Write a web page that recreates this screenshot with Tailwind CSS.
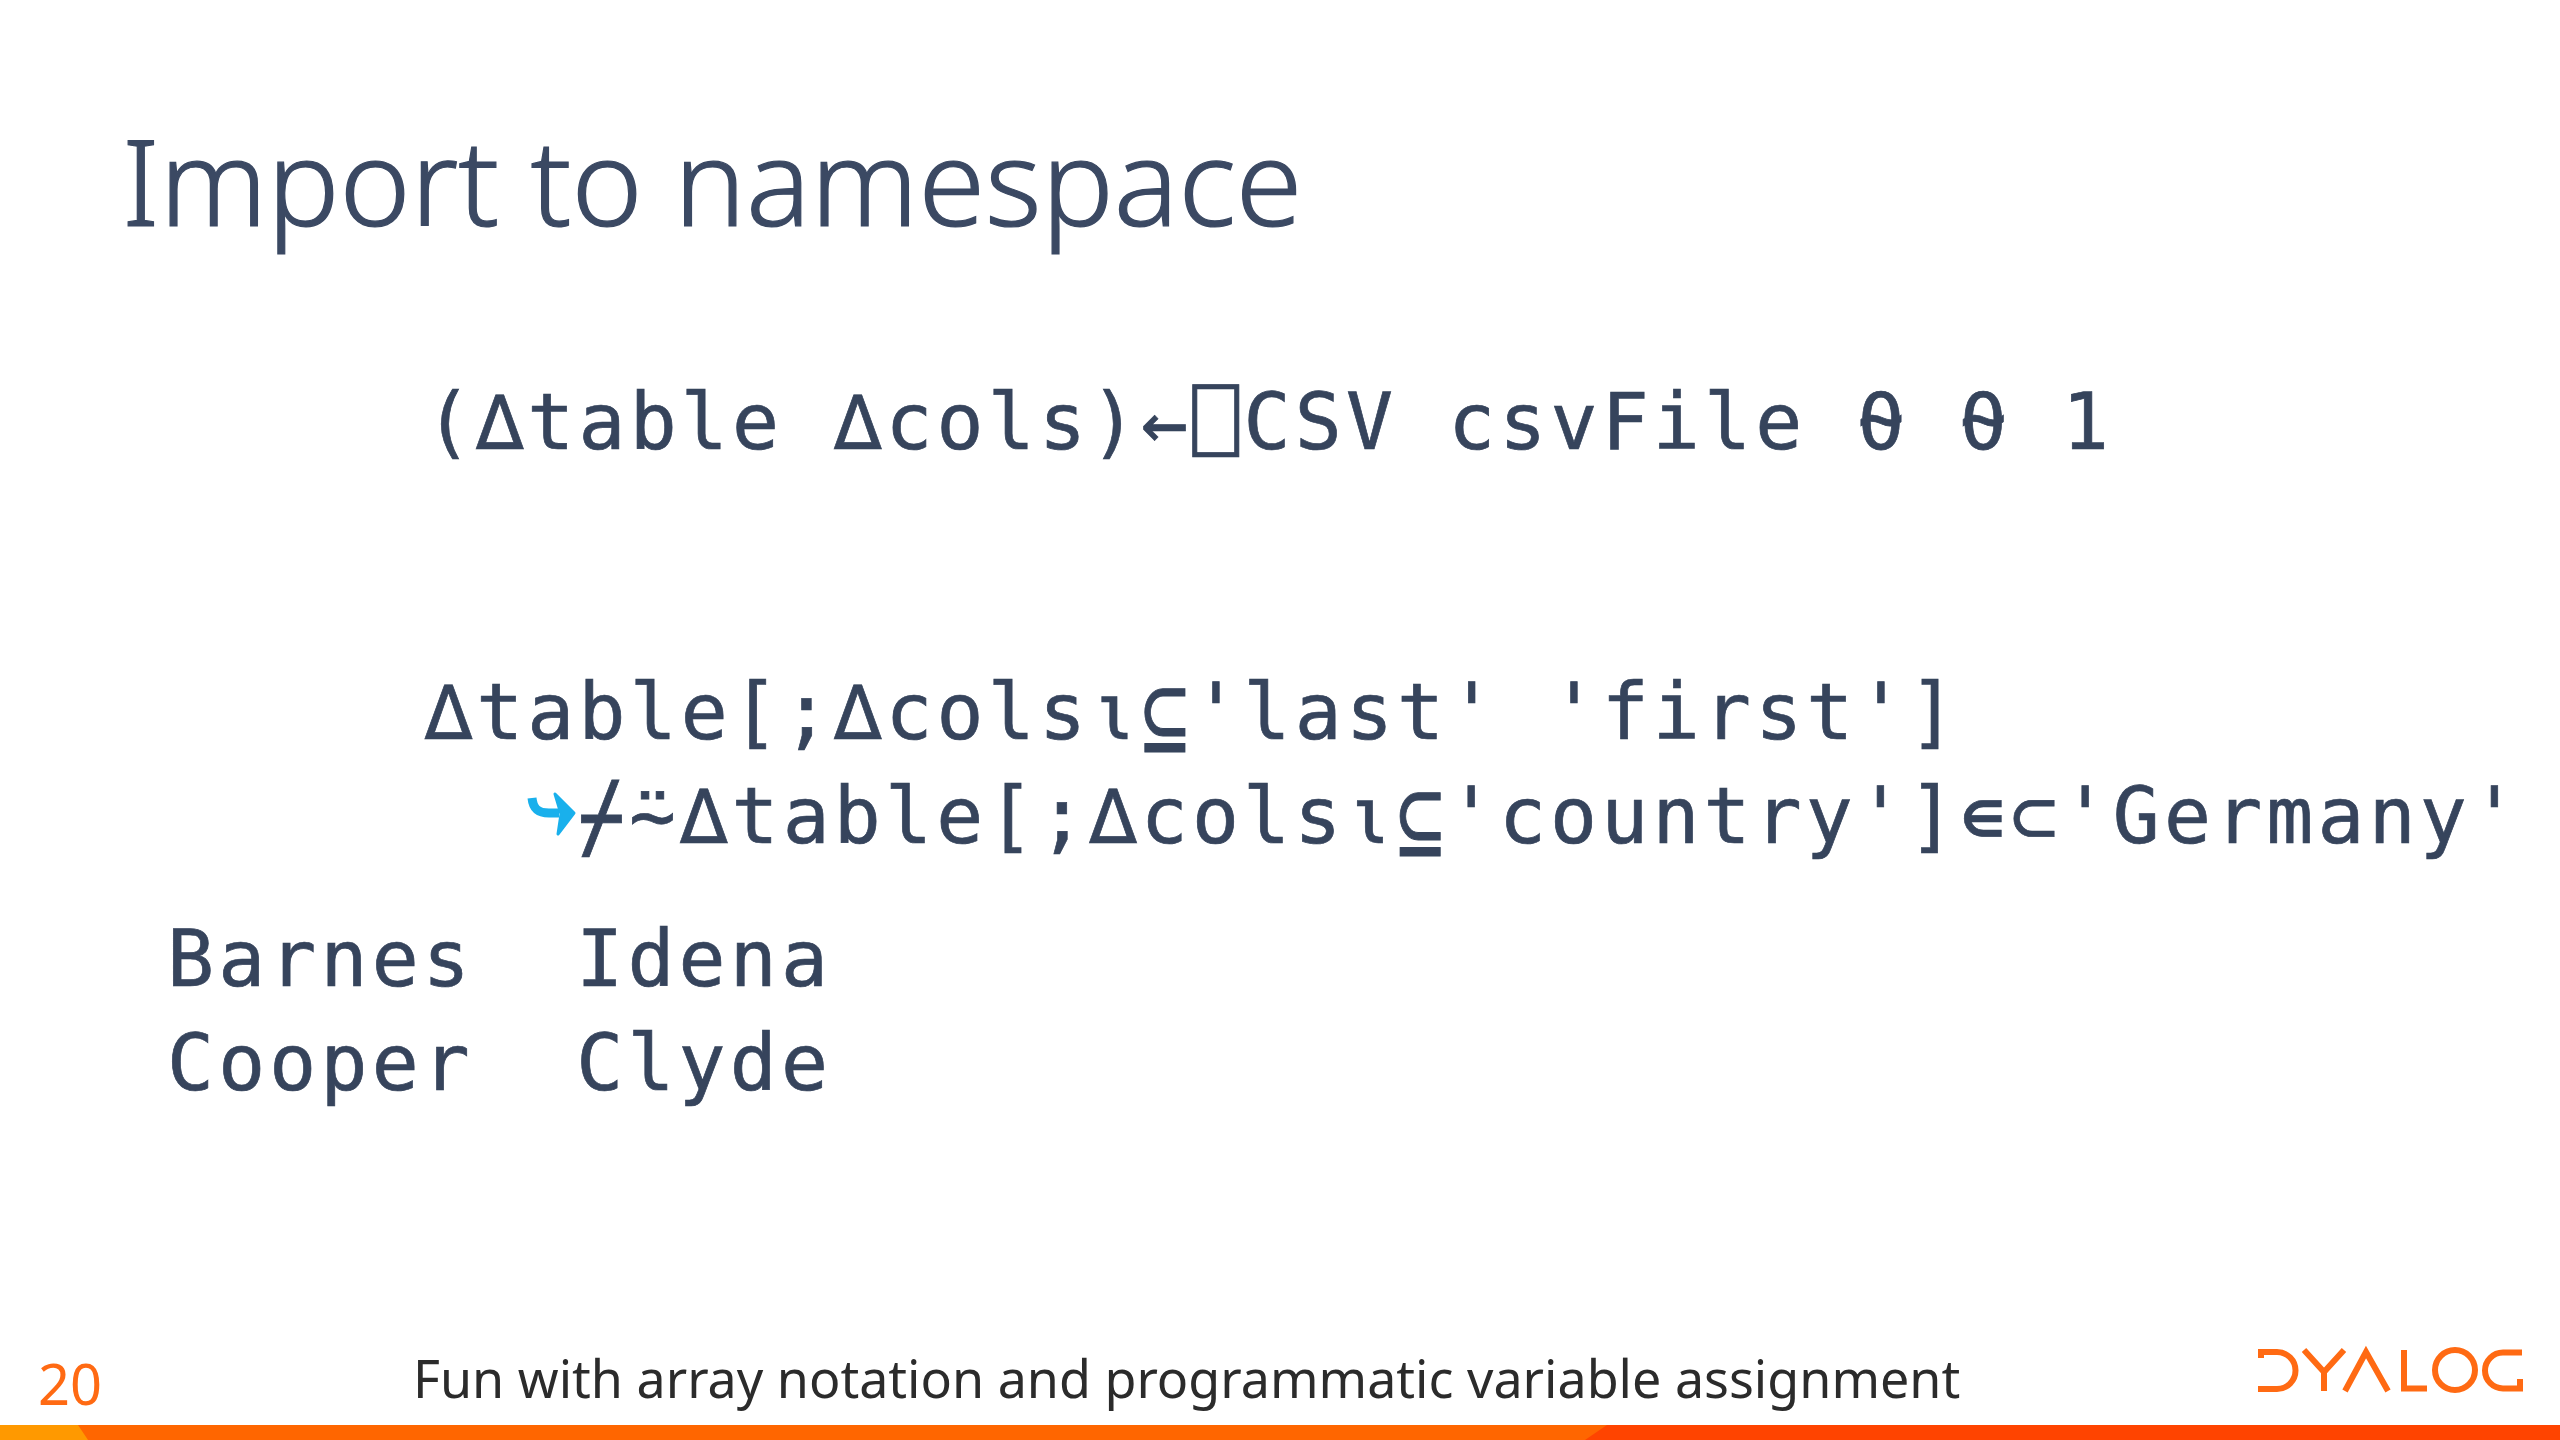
<!DOCTYPE html>
<html>
<head>
<meta charset="utf-8">
<script src="https://cdn.jsdelivr.net/npm/@tailwindcss/browser@4"></script>
</head>
<body class="bg-white">
<div class="w-[2560px] h-[1440px] bg-white flex flex-col overflow-hidden font-['Noto_Sans',sans-serif]">
  <h1 class="pl-[122px] pt-[101px] text-[120.6px] leading-[156px] text-[#3b4963] font-light [-webkit-text-stroke:1.2px_#3b4963] whitespace-pre h-[370px]">Import to namespace</h1>
  <div class="pl-[167px] text-[78px] leading-[104px] tracking-[4.2px] text-[#36445c] [-webkit-text-stroke:0.7px_#36445c] whitespace-pre font-['DejaVu_Sans_Mono',monospace] flex flex-col">
    <div class="pl-[258px] h-[290px]">(∆table ∆cols)←⎕CSV csvFile ⍬ ⍬ 1</div>
    <div class="pl-[258px]">∆table[;∆cols⍳<span class="inline-block scale-y-[1.3] origin-[50%_35%]">⊆</span>'last' 'first']</div>
    <div class="pl-[360px] flex"><svg class="w-[51px] h-[104px] shrink-0" viewBox="0 0 51 104" fill="none"><path d="M5 34 C6 44 10 49 22 49 H32" stroke="#19b0ec" stroke-width="9"/><path d="M28 30 L47 49 L31 70 L34 50 Z" fill="#19b0ec" stroke="#19b0ec" stroke-width="3" stroke-linejoin="round"/></svg><span><span class="inline-block scale-y-[1.2]">⌿</span>⍨∆table[;∆cols⍳<span class="inline-block scale-y-[1.3] origin-[50%_35%]">⊆</span>'country']∊⊂'Germany'</span></div>
    <div class="mt-[39px]">Barnes  Idena</div>
    <div>Cooper  Clyde</div>
  </div>
  <div class="mt-auto flex items-end h-[120px] relative">
    <span class="ml-[38px] mb-[7px] text-[56px] leading-[70px] text-[#ff6a13] w-[375px]">20</span>
    <span class="mb-[12px] text-[52px] leading-[70px] text-[#2b2b2b] whitespace-pre">Fun with array notation and programmatic variable assignment</span>
    <svg class="absolute left-[2220px] top-[15px] w-[340px] h-[90px]" viewBox="0 0 340 90" fill="none" stroke="#ff6a13" stroke-width="6"><path d="M41 38 V32 H57 A18.5 18.5 0 0 1 57 69 H38"/><path d="M84 30 L104 52 L124 30 M104 50 V71"/><path d="M125 71 L146 32 L168 71"/><path d="M184 30 V68.5 H207"/><circle cx="235" cy="50" r="20"/><path d="M302 32.5 H283 A18 18 0 0 0 283 68.5 H300 V59"/></svg>
  </div>
  <svg class="w-[2560px] h-[15px] shrink-0 block" viewBox="0 0 2560 15" preserveAspectRatio="none"><rect width="2560" height="15" fill="#ff6600"/><polygon points="0,0 78,0 88,15 0,15" fill="#ff9900"/><polygon points="1607,0 2560,0 2560,15 1585,15" fill="#ff4400"/></svg>
</div>
</body>
</html>
